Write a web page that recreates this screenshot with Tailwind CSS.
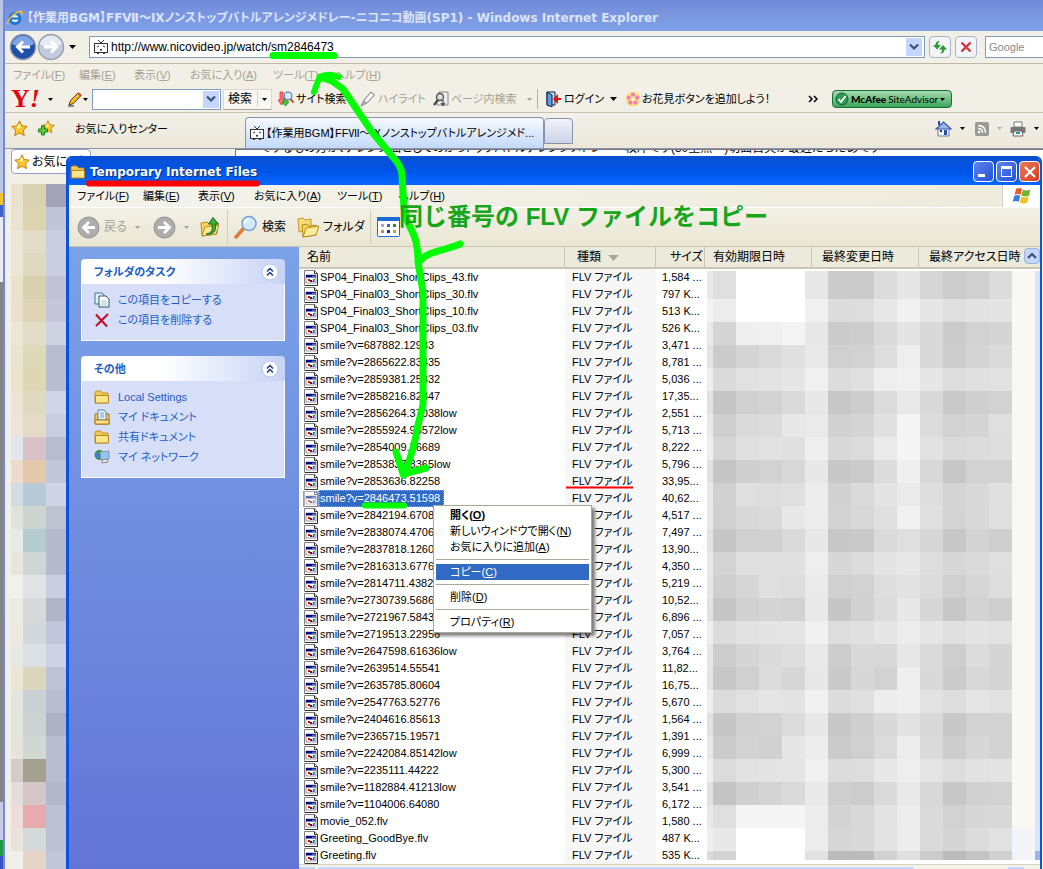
<!DOCTYPE html>
<html lang="ja">

<head>
    <meta charset="UTF-8" />
    <meta name="viewport" content="width=device-width, initial-scale=1.0" />
    <title>Temporary Internet Files</title>
    <script src="https://cdn.jsdelivr.net/npm/@tailwindcss/browser@4"></script>
</head>

<body class="bg-[#808080] text-black text-[11px] leading-4 font-['Liberation_Sans','Noto_Sans_CJK_JP',sans-serif] [font-feature-settings:'palt']">

    <!-- icon set -->
    <svg class="hidden">
        <symbol id="caret" viewBox="0 0 7 4"><path d="M0 0h7L3.5 4z" fill="currentColor" /></symbol>
        <symbol id="folder" viewBox="0 0 16 16">
            <path d="M1 3.5 2 2h5l1.500 2H14v10H1z" fill="#f3c94c" stroke="#b98412" stroke-width=".8" />
            <path d="M1.500 6.500H14.500V14H1.500z" fill="#fde68a" stroke="#a87512" stroke-width=".8" />
        </symbol>
        <symbol id="file" viewBox="0 0 16 16">
            <path d="M1.5.5h10l3 3v12h-13z" fill="#fff" stroke="#808080" />
            <path d="M11.5.5v3h3M14.5 4v11.5H2" fill="none" stroke="#333" />
            <path d="M3 5h10v8H3z" fill="#fff" stroke="#555" stroke-width=".6" />
            <path d="M3 5h10v2.5H3z" fill="#000a80" />
            <path d="M9.5 5.7h1v1h-1zM11.5 5.7h1v1h-1z" fill="#fff" />
            <path d="M5 9h2v2H5z" fill="#d00" /><path d="M7 10h2v2H7z" fill="#800" /><path d="M10 9h2v1.500h-2z" fill="#0a9a30" /><path d="M9.500 10.500h2V12h-2z" fill="#22f" />
        </symbol>
        <symbol id="tv" viewBox="0 0 14 14">
            <path d="M4 0l3 3 3-3" fill="none" stroke="#333" />
            <rect x=".5" y="3.500" width="13" height="9" fill="#fff" stroke="#333" />
            <path d="M3 7l2-1M11 7 9 6M6 10l1-.8 1 .8z" stroke="#333" fill="#333" />
            <path d="M3 13.500h2M9 13.500h2" stroke="#333" />
        </symbol>
        <symbol id="star" viewBox="0 0 16 16">
            <path d="M8 .8l2.200 4.700 5.100.6-3.800 3.500 1 5.100L8 12.200l-4.500 2.500 1-5.100L.7 6.100l5.100-.6z" fill="#fcc62c" stroke="#c07a08" stroke-width=".9" />
            <path d="M8 3l1.200 3.300L8 8 5 7z" fill="#fff3a8" />
        </symbol>
        <symbol id="chevrons" viewBox="0 0 18 18">
            <circle cx="9" cy="9" r="8" fill="#fff" stroke="#b6c4e8" />
            <path d="M6 8.500l3-3 3 3M6 12.500l3-3 3 3" fill="none" stroke="#15398c" stroke-width="1.500" />
        </symbol>
    </svg>

    <div class="relative h-screen min-h-[869px] w-full overflow-hidden">

        <!-- desktop edge -->
        <div class="absolute inset-y-0 left-0 w-[3px] flex flex-col">
            <div class="h-[193px] bg-[#b9c6e4]"></div>
            <div class="h-3 bg-[#f0c22c]"></div>
            <div class="h-3 bg-[#3f62c8]"></div>
            <div class="h-[65px] bg-[#e9eaf2]"></div>
            <div class="h-[520px] bg-[#858585]"></div>
            <div class="h-[38px] bg-[#c9cbe6]"></div>
            <div class="h-4 bg-[#1f9a3c]"></div>
            <div class="flex-1 bg-[#3b4fc4]"></div>
        </div>

        <!-- internet explorer window -->
        <section class="absolute inset-y-0 left-[3px] right-0 flex flex-col border-l-2 border-[#7488dc] bg-[#f1efe6]">
            <header class="h-[31px] shrink-0 flex items-center gap-1 pl-0.5 pt-1 whitespace-nowrap bg-linear-to-b from-[#6f88d8] via-[#7b97e0] to-[#7da0e8]">
                <svg class="w-4 h-4 shrink-0" viewBox="0 0 16 16">
                    <circle cx="8" cy="8.500" r="5" fill="#e8f3ff" stroke="#1d78d6" stroke-width="3" />
                    <path d="M4 8.500h8.500" stroke="#1d78d6" stroke-width="2.200" />
                    <path d="M1 14.500C-1 11 8 1 14.500 1.500c1 .2.8 2-.2 3.500" fill="none" stroke="#f6c21c" stroke-width="1.500" />
                </svg>
                <h1 class="text-[12px] font-bold text-[#dbe4fb] font-['DejaVu_Sans','Noto_Sans_CJK_JP',sans-serif]">【作業用BGM】FFⅦ～Ⅸノンストップバトルアレンジメドレー‐ニコニコ動画(SP1) - Windows Internet Explorer</h1>
            </header>

            <!-- address bar -->
            <div class="h-[33px] shrink-0 flex items-center pl-1 border-b border-[#bdb9a6] bg-[#f1efe6]">
                <button class="w-7 shrink-0" aria-label="戻る">
                    <svg class="w-7 h-7" viewBox="0 0 28 28">
                        <circle cx="14" cy="14" r="12.500" fill="#1c4fa8" stroke="#8c97ab" stroke-width="1.500" />
                        <path d="M3 11a11.500 11.500 0 0 1 22 0c-7 4-15 4-22 0z" fill="#7fa6e3" />
                        <path d="M21 14H9M14 8.500 8.500 14l5.500 5.500" fill="none" stroke="#fff" stroke-width="3" />
                    </svg>
                </button>
                <button class="w-7 shrink-0" aria-label="進む">
                    <svg class="w-7 h-7" viewBox="0 0 28 28">
                        <circle cx="14" cy="14" r="12.500" fill="#c3ccdc" stroke="#98a1b3" stroke-width="1.500" />
                        <path d="M3 11a11.500 11.500 0 0 1 22 0c-7 4-15 4-22 0z" fill="#e6ebf3" />
                        <path d="M7 14h12M14 8.500l5.500 5.500-5.500 5.500" fill="none" stroke="#fff" stroke-width="3" />
                    </svg>
                </button>
                <svg class="w-[7px] h-1 mx-1 shrink-0"><use href="#caret" /></svg>
                <div class="ml-[9px] h-[22px] flex-1 flex items-center pl-1 pr-0.5 bg-white border border-[#7f9db9]">
                    <svg class="w-3.5 h-3.5 shrink-0"><use href="#tv" /></svg>
                    <input type="text" aria-label="アドレス" value="http://www.nicovideo.jp/watch/sm2846473" class="flex-1 pl-[3px] text-[12px] leading-4 outline-none" />
                    <button class="w-4 h-[18px] flex items-center justify-center bg-[#c4d6fb]" aria-label="履歴">
                        <svg class="w-2.5 h-2" viewBox="0 0 10 8"><path d="M1 1.500l4 4 4-4" fill="none" stroke="#3d5076" stroke-width="2.200" /></svg>
                    </button>
                </div>
                <button class="ml-1 w-[22px] h-[22px] shrink-0 flex items-center justify-center rounded-sm bg-[#f3f5fa] border border-[#a9b4c8]" aria-label="更新">
                    <svg class="w-4 h-4" viewBox="0 0 16 16" fill="#2e9a32"><path d="M8 2C4.500 2 3.500 4 3.500 6H1l4 4.500L9 6H6C6 4 6.500 3 8 2z" /><path d="M8 14.500c3.500 0 4.500-2 4.500-4H15L11 6 7 10.500h3c0 2-.5 3-2 4z" /></svg>
                </button>
                <button class="ml-1 w-[22px] h-[22px] shrink-0 flex items-center justify-center rounded-sm bg-[#f3f5fa] border border-[#a9b4c8]" aria-label="中止">
                    <svg class="w-3 h-3" viewBox="0 0 12 12"><path d="M1.500 1.500l9 9M10.500 1.500l-9 9" stroke="#d2373c" stroke-width="2.400" /></svg>
                </button>
                <input type="text" aria-label="検索" placeholder="Google" class="ml-2 w-[58px] h-[22px] shrink-0 px-[3px] bg-white border border-r-0 border-[#7f9db9] text-[11px] placeholder:text-[#8a8a8a] outline-none" />
            </div>

            <!-- menu -->
            <nav class="h-[22px] shrink-0 flex items-center pl-2 text-[#a5a294] whitespace-nowrap">
                <button class="w-[66px] text-left">ファイル(<u>F</u>)</button>
                <button class="w-[55px] text-left">編集(<u>E</u>)</button>
                <button class="w-[56px] text-left">表示(<u>V</u>)</button>
                <button class="w-[83px] text-left">お気に入り(<u>A</u>)</button>
                <button class="w-[61px] text-left">ツール(<u>T</u>)</button>
                <button class="text-left">ヘルプ(<u>H</u>)</button>
            </nav>

            <!-- yahoo toolbar -->
            <div class="h-[27px] shrink-0 flex items-center pl-1.5 border-b border-[#c5c2b2] whitespace-nowrap">
                <span class="w-[35px] shrink-0 font-['Liberation_Serif',serif] font-bold text-[26px] leading-6 text-[#e60012]">Y<i>!</i></span>
                <svg class="w-[5px] h-[3px] mx-0.5 shrink-0"><use href="#caret" /></svg>
                <svg class="ml-3 w-4 h-4 shrink-0" viewBox="0 0 16 16">
                    <path d="M2 14l1.500-4.500L11 2l3 2.500-7.500 8z" fill="#f7b733" stroke="#5a3a08" /><path d="M11 2l3 2.500" stroke="#d43" stroke-width="2" /><path d="M1 15h6" stroke="#222" />
                </svg>
                <svg class="w-[5px] h-[3px] shrink-0"><use href="#caret" /></svg>
                <div class="ml-1 w-[129px] h-[21px] shrink-0 flex items-center p-px bg-white border border-[#7f9db9]">
                    <input type="text" aria-label="Yahoo!検索" class="w-0 flex-1 outline-none" />
                    <button class="w-4 h-[17px] flex items-center justify-center bg-[#c4d6fb]" aria-label="履歴">
                        <svg class="w-2.5 h-2" viewBox="0 0 10 8"><path d="M1 1.500l4 4 4-4" fill="none" stroke="#3d5076" stroke-width="2.200" /></svg>
                    </button>
                </div>
                <button class="ml-0.5 w-[49px] h-[21px] shrink-0 flex items-center bg-[#f8f7f2] border border-[#dcd9cc] border-b-[#a8a595]">
                    <span class="w-[34px] pl-1 border-r border-[#d5d2c4] text-[12px] text-left">検索</span>
                    <svg class="ml-1 w-[5px] h-[3px]"><use href="#caret" /></svg>
                </button>
                <button class="ml-1.5 w-[82px] shrink-0 flex items-center gap-0.5">
                    <svg class="w-4 h-4" viewBox="0 0 16 16">
                        <path d="M2 1h3v8h2l-3.500 5L0 9h2z" fill="#f77" stroke="#d22" stroke-width=".7" /><path d="M6 6h3v5h2l-3.500 4L4 11h2z" fill="#4c4" stroke="#171" stroke-width=".7" />
                        <circle cx="10" cy="5" r="3.800" fill="#d5ebff" stroke="#5b86c5" stroke-width="1.300" /><path d="M12.500 8l3 3.500" stroke="#c05a2a" stroke-width="2" />
                    </svg>サイト検索
                </button>
                <button class="w-[73px] shrink-0 flex items-center gap-0.5 text-[#a5a294]">
                    <svg class="w-4 h-4" viewBox="0 0 16 16"><path d="M1 15l3-6 7-8 3.500 3L7 12z" fill="#f5f5f5" stroke="#777" /><path d="M1 15l3-6 3 3z" fill="#aaa" /></svg>ハイライト
                </button>
                <button class="w-[104px] shrink-0 flex items-center gap-0.5 text-[#a5a294]">
                    <svg class="w-4 h-4" viewBox="0 0 16 16"><path d="M6 1h9v13H4V6z" fill="#eee" stroke="#888" /><circle cx="7" cy="6" r="3.500" fill="#ddd" stroke="#555" stroke-width="1.400" /><path d="M5 9l-4 5" stroke="#444" stroke-width="2.200" /><path d="M10 9v5M8 12l2 2.500 2-2.500" stroke="#555" fill="none" stroke-width="1.300" /></svg>ページ内検索
                    <svg class="ml-2 w-[5px] h-[3px]"><use href="#caret" /></svg>
                </button>
                <div class="w-px h-5 shrink-0 bg-[#b5b2a3]"></div>
                <button class="ml-2 w-[79px] shrink-0 flex items-center gap-0.5">
                    <svg class="w-4 h-4" viewBox="0 0 16 16"><path d="M1 1h8v13H1z" fill="#cde" stroke="#124" /><path d="M1 1l5 3v12l-5-2z" fill="#5b9be0" stroke="#124" /><path d="M15 8h-4M11 5.500 8.500 8l2.500 2.500z" stroke="#d11" fill="#d11" stroke-width="2" /></svg>ログイン
                    <svg class="ml-1 w-[7px] h-1"><use href="#caret" /></svg>
                </button>
                <button class="w-[183px] shrink-0 flex items-center gap-px">
                    <svg class="w-4 h-4" viewBox="0 0 16 16">
                        <circle cx="8" cy="8" r="7.500" fill="#fbe27a" />
                        <g fill="#f27cc0"><circle cx="8" cy="3.600" r="2.100" /><circle cx="12.200" cy="6.700" r="2.100" /><circle cx="10.600" cy="11.600" r="2.100" /><circle cx="5.400" cy="11.600" r="2.100" /><circle cx="3.800" cy="6.700" r="2.100" /></g>
                        <circle cx="8" cy="8" r="1.500" fill="#fff" />
                    </svg>お花見ボタンを追加しよう！
                </button>
                <svg class="w-2.5 h-2 shrink-0" viewBox="0 0 10 8"><path d="M1 1l3 3-3 3M6 1l3 3-3 3" fill="none" stroke="#000" stroke-width="1.500" /></svg>
                <button class="ml-3.5 w-[120px] h-[18px] shrink-0 flex items-center gap-0.5 pl-0.5 rounded-sm border border-[#14703a] bg-linear-to-b from-[#a5d9ae] to-[#35a85c] font-['Lato',sans-serif] text-[10px]">
                    <svg class="w-3.5 h-3.5 shrink-0" viewBox="0 0 14 14"><circle cx="7" cy="7" r="6" fill="#2f9a55" stroke="#175c33" /><path d="M3.500 7l2.500 3 4.500-6" fill="none" stroke="#fff" stroke-width="1.800" /></svg>
                    <b class="font-black">McAfee</b> SiteAdvisor
                    <svg class="w-[5px] h-[3px]"><use href="#caret" /></svg>
                </button>
            </div>

            <!-- favorites and tabs -->
            <div class="h-9 shrink-0 flex items-end border-b border-[#8b94b5] bg-linear-to-b from-[#f3f1e9] to-[#ebe8da] whitespace-nowrap">
                <div class="w-[240px] h-full shrink-0 flex items-center pl-1.5 pb-1">
                    <svg class="w-[17px] h-[17px]"><use href="#star" /></svg>
                    <svg class="ml-2.5 w-[17px] h-[17px]" viewBox="0 0 17 17"><use href="#star" x="3" width="14" height="14" /><path d="M3.500 6h3v3h3v3h-3v3h-3v-3h-3V9h3z" fill="#5ccb3c" stroke="#1e7d18" /></svg>
                    <span class="ml-5">お気に入りセンター</span>
                </div>
                <button class="w-[299px] h-[31px] shrink-0 flex items-center gap-0.5 pl-1 rounded-t border border-b-0 border-[#8a93ae] bg-linear-to-b from-[#f6f9ff] to-[#c3d9fb] text-[11px]">
                    <svg class="w-3.5 h-3.5"><use href="#tv" /></svg>【作業用BGM】FFⅦ～Ⅸノンストップバトルアレンジメド...
                </button>
                <button class="w-[29px] h-[26px] mb-1 shrink-0 rounded-t border border-[#8a93ae] bg-linear-to-b from-[#f2f3fa] to-[#cdd2e8]" aria-label="新しいタブ"></button>
                <div class="flex-1 h-full flex items-center justify-end gap-2 pr-1 pb-1">
                    <svg class="w-[17px] h-[17px]" viewBox="0 0 17 17"><path d="M3 8v8h11V8" fill="#f0f3fa" stroke="#6a7ba0" /><path d="M1 9l7.500-7L16 9z" fill="#9db6e6" stroke="#3a59a8" stroke-width="1.200" /><path d="M3 1h2v4H3z" fill="#2440c0" /><path d="M9 10h3v5H9z" fill="#264f9c" /><path d="M5 10h2v2H5z" fill="#333" /></svg>
                    <svg class="w-[5px] h-[3px]"><use href="#caret" /></svg>
                    <svg class="ml-0.5 w-3.5 h-3.5" viewBox="0 0 14 14"><rect width="14" height="14" rx="2" fill="#9a9a94" /><circle cx="4" cy="10" r="1.300" fill="#fff" /><path d="M3 6.500c3 0 4.500 2 4.500 4.500M3 3.500c5 0 7.500 3 7.500 7.500" fill="none" stroke="#fff" stroke-width="1.300" /></svg>
                    <svg class="w-[5px] h-[3px] text-[#b5b2a3]"><use href="#caret" /></svg>
                    <svg class="w-4 h-4" viewBox="0 0 16 16"><path d="M4 1h8v5H4z" fill="#fff" stroke="#777" /><rect x=".5" y="6" width="15" height="6" rx="1" fill="#777" /><path d="M4 10h8l1 5H3z" fill="#fff" stroke="#666" /><path d="M6 12h4" stroke="#1a9bb0" stroke-width="2" /></svg>
                    <svg class="w-[5px] h-[3px]"><use href="#caret" /></svg>
                </div>
            </div>

            <!-- page area -->
            <div class="flex-1 min-h-0 flex overflow-hidden">
                <aside class="w-[230px] shrink-0">
                    <button class="ml-1.5 w-20 h-[25px] flex items-center gap-0.5 pl-0.5 bg-white border border-[#8fa3c4] rounded-sm text-[12px] whitespace-nowrap">
                        <svg class="w-4 h-4 shrink-0"><use href="#star" /></svg>お気に入り
                    </button>
                    <div id="favMosaic" class="ml-1.5 mt-2.5 w-[55px]"></div>
                </aside>
                <div class="flex-1 bg-white border-l border-t border-[#777] pl-6 overflow-hidden">
                    <p class="-mt-2.5 whitespace-nowrap text-[12px]">でするもの方が、アレンジ曲としてのかっトックバトルアレンジメドレー一枚岸です(30堂無一)切面首矢が最近だらだめです</p>
                </div>
            </div>
        </section>

        <!-- explorer window -->
        <section class="absolute top-[156px] bottom-0 left-[66px] right-px flex flex-col border-l-3 border-r-2 border-[#0a52e0] rounded-t-md overflow-hidden bg-[#ece9d8]">
            <header class="h-[29px] shrink-0 flex items-center pt-0.5 bg-linear-to-b from-[#0a4fd0] via-[#0054e8] to-[#0667ff]">
                <svg class="ml-px w-4 h-4"><use href="#folder" /></svg>
                <h2 class="ml-1 flex-1 text-[12px] font-bold text-white font-['DejaVu_Sans',sans-serif] [text-shadow:1px_1px_#0a2d80]">Temporary Internet Files</h2>
                <button class="w-[21px] h-[21px] mr-0.5 flex items-end rounded-sm border border-white bg-linear-to-br from-[#5f84ee] to-[#2450d8] pl-1 pb-1" aria-label="最小化"><span class="w-[7px] h-[3px] bg-white"></span></button>
                <button class="w-[21px] h-[21px] mr-0.5 flex items-center justify-center rounded-sm border border-white bg-linear-to-br from-[#5f84ee] to-[#2450d8]" aria-label="最大化"><span class="w-[11px] h-[11px] border border-t-3 border-white"></span></button>
                <button class="w-[21px] h-[21px] flex items-center justify-center rounded-sm border border-white bg-linear-to-br from-[#ea7a5c] to-[#d63a14]" aria-label="閉じる"><svg class="w-3 h-3" viewBox="0 0 12 12"><path d="M1 1l10 10M11 1 1 11" stroke="#fff" stroke-width="2.200" /></svg></button>
            </header>

            <!-- menu -->
            <nav class="h-[23px] shrink-0 flex items-center pl-2 border-b border-white whitespace-nowrap bg-linear-to-r from-[#f4f3ec] to-[#eeebdc]">
                <button class="w-[66px] text-left">ファイル(<u>F</u>)</button>
                <button class="w-[55px] text-left">編集(<u>E</u>)</button>
                <button class="w-[56px] text-left">表示(<u>V</u>)</button>
                <button class="w-[83px] text-left">お気に入り(<u>A</u>)</button>
                <button class="w-[61px] text-left">ツール(<u>T</u>)</button>
                <button class="text-left">ヘルプ(<u>H</u>)</button>
                <div class="ml-auto w-[38px] h-full flex items-center justify-center bg-white border-l border-[#d5d2c4]">
                    <svg class="w-5 h-[18px]" viewBox="0 0 20 18"><path d="M4 2c2-1.500 4-1.500 6 0L8.500 8c-2-1.300-4-1.300-6 0z" fill="#ee5a28" /><path d="M11 2.500c2 1.300 5 1.300 7.500 0L17 8.500c-2.500 1.300-5 1.300-7.500 0z" fill="#6db52c" /><path d="M2.200 9c2-1.300 4-1.300 6 0L6.700 15c-2-1.300-4-1.300-6 0z" fill="#3b7fd8" /><path d="M9.200 9.500c2 1.300 5 1.300 7.500 0l-1.500 6c-2.500 1.300-5 1.300-7.500 0z" fill="#f7c01e" /></svg>
                </div>
            </nav>

            <!-- toolbar -->
            <div class="h-[39px] shrink-0 flex items-center pl-2 border-b border-[#c9c6b4] whitespace-nowrap bg-linear-to-b from-[#f3f1e7] to-[#e9e6d3]">
                <button class="w-[76px] flex items-center gap-1 text-[12px] text-[#a5a294]">
                    <svg class="w-[23px] h-[23px]" viewBox="0 0 23 23"><circle cx="11.500" cy="11.500" r="10.500" fill="#adadad" stroke="#8f8f8f" /><path d="M18 11.500H7M12 6l-5.500 5.500L12 17" fill="none" stroke="#fff" stroke-width="2.800" /></svg>戻る
                    <svg class="ml-1 w-[5px] h-[3px]"><use href="#caret" /></svg>
                </button>
                <button class="w-[46px] flex items-center gap-2 text-[#a5a294]" aria-label="進む">
                    <svg class="w-[23px] h-[23px]" viewBox="0 0 23 23"><circle cx="11.500" cy="11.500" r="10.500" fill="#adadad" stroke="#8f8f8f" /><path d="M5 11.500h11M11 6l5.500 5.500L11 17" fill="none" stroke="#fff" stroke-width="2.800" /></svg>
                    <svg class="w-[5px] h-[3px]"><use href="#caret" /></svg>
                </button>
                <button class="w-[28px]" aria-label="上へ">
                    <svg class="w-[22px] h-[22px]" viewBox="0 0 22 22"><path d="M2 7l6-1 2 2 8-1v11L3 20z" fill="#f5d35e" stroke="#b58a1a" /><path d="M3 20 6 11l14-2-3 9z" fill="#fde995" stroke="#b58a1a" /><path d="M7 18c6-1 7-4 6-10H9.500L14 1.500 19.500 8h-3c1 7-2 11-9.500 10z" fill="#3fae3a" stroke="#176b1a" /></svg>
                </button>
                <div class="w-px h-[34px] bg-[#cfccba]"></div>
                <button class="ml-1.5 w-[63px] flex items-center gap-1 text-[12px]">
                    <svg class="w-6 h-6" viewBox="0 0 24 24"><path d="M10 13 2 22" stroke="#e0793c" stroke-width="3.500" stroke-linecap="round" /><circle cx="15" cy="8.500" r="7" fill="#cfeafd" stroke="#7c9fd6" stroke-width="1.500" /><path d="M11 8c0-2 2-4 4-4" stroke="#fff" stroke-width="2" fill="none" /></svg>検索
                </button>
                <button class="w-[73px] flex items-center gap-1 text-[12px]">
                    <svg class="w-[22px] h-[22px]" viewBox="0 0 22 22"><path d="M1 3l5-1 2 2 6-1v10l-12 3z" fill="#f8dc78" stroke="#c1962a" /><path d="M5 9l5-1 2 2 7-1v10L6 21z" fill="#f5d35e" stroke="#b58a1a" /><path d="M6 21l3-9 13-2-3 9z" fill="#fdeb9c" stroke="#b58a1a" /></svg>フォルダ
                </button>
                <div class="w-px h-[34px] bg-[#cfccba]"></div>
                <button class="ml-1.5" aria-label="表示">
                    <svg class="w-[23px] h-5" viewBox="0 0 23 20"><rect x=".5" y=".5" width="22" height="19" rx="1" fill="#fff" stroke="#1c6ad4" /><path d="M0 0h23v4H0z" fill="#1c6ad4" /><path d="M4 7h3v3H4z" fill="#aab" /><path d="M10 7h3v3h-3z" fill="#36c" /><path d="M16 7h3v3h-3z" fill="#292" /><path d="M4 13h3v3H4z" fill="#e75" /><path d="M10 13h3v3h-3z" fill="#139" /><path d="M16 13h3v3h-3z" fill="#d9a010" /></svg>
                </button>
            </div>

            <div class="flex-1 min-h-0 flex overflow-hidden">
                <!-- task pane -->
                <aside class="w-[230px] shrink-0 flex flex-col gap-[15px] pl-3 pr-3.5 pt-3 bg-linear-to-b from-[#7ba2e7] to-[#6375d6] text-[#215dc6]">
                    <section>
                        <h3 class="h-[25px] flex items-center justify-between pl-[13px] pr-1.5 rounded-t bg-linear-to-r from-white from-40% to-[#c6d3f7] font-bold text-[11px]">フォルダのタスク<svg class="w-[18px] h-[18px]"><use href="#chevrons" /></svg></h3>
                        <ul class="pt-1.5 pb-2.5 pl-3 border border-t-0 border-white bg-[#d6dff7]">
                            <li><a href="#" class="h-5 flex items-center gap-2">
                                <svg class="w-4 h-4" viewBox="0 0 16 16"><path d="M1 1h7l2 2v9H1z" fill="#dff0ff" stroke="#3c6ea8" /><path d="M5 4h7l3 3v8H5z" fill="#fff" stroke="#33506e" /><path d="M7 9h6M7 11h6M7 13h6" stroke="#9cc" /></svg>この項目をコピーする</a></li>
                            <li><a href="#" class="h-5 flex items-center gap-2">
                                <svg class="w-4 h-4" viewBox="0 0 16 16"><path d="M2 2.500l11 12M14 2 2 14" stroke="#c41230" stroke-width="2.200" /></svg>この項目を削除する</a></li>
                        </ul>
                    </section>
                    <section>
                        <h3 class="h-[25px] flex items-center justify-between pl-[13px] pr-1.5 rounded-t bg-linear-to-r from-white from-40% to-[#c6d3f7] font-bold text-[11px]">その他<svg class="w-[18px] h-[18px]"><use href="#chevrons" /></svg></h3>
                        <ul class="pt-1.5 pb-2.5 pl-3 border border-t-0 border-white bg-[#d6dff7]">
                            <li><a href="#" class="h-5 flex items-center gap-2"><svg class="w-4 h-4"><use href="#folder" /></svg>Local Settings</a></li>
                            <li><a href="#" class="h-5 flex items-center gap-2">
                                <svg class="w-4 h-4" viewBox="0 0 16 16"><path d="M1 5h14v10H1z" fill="#f3c94c" stroke="#a87512" /><path d="M4 1h6l2 2v8H4z" fill="#eaf6ff" stroke="#4d83b8" /><path d="M6 4h4M6 6h4M6 8h4" stroke="#79b" /><path d="M1 11h14v4H1z" fill="#fde68a" stroke="#a87512" /></svg>マイ ドキュメント</a></li>
                            <li><a href="#" class="h-5 flex items-center gap-2"><svg class="w-4 h-4"><use href="#folder" /></svg>共有ドキュメント</a></li>
                            <li><a href="#" class="h-5 flex items-center gap-2">
                                <svg class="w-4 h-4" viewBox="0 0 16 16"><circle cx="5.500" cy="6" r="5" fill="#2f9a3a" /><path d="M1 5c3-3 5 0 4 3s-3 1-4-3z" fill="#3b7fe0" /><path d="M6 3l9-1v8l-8 1z" fill="#8fc8f5" stroke="#8a93ae" /><path d="M8 14l6-1-1-3-5 1z" fill="#e8e8e8" stroke="#888" /></svg>マイ ネットワーク</a></li>
                        </ul>
                    </section>
                </aside>

                <!-- file list -->
                <main class="relative flex-1 min-w-0 flex flex-col bg-white">
                    <table class="w-full table-fixed border-separate border-spacing-0 whitespace-nowrap">
                        <colgroup>
                            <col class="w-[266px]" />
                            <col class="w-[91px]" />
                            <col class="w-[49px]" />
                            <col class="w-[107px]" />
                            <col class="w-[107px]" />
                            <col />
                        </colgroup>
                        <thead class="text-[12px] text-left bg-[#ebeadb]">
                            <tr class="h-[22px]">
                                <th class="font-normal p-0 pl-2 border-b-2 border-r border-[#c9c6b4]">名前</th>
                                <th class="font-normal p-0 pl-3 border-b-2 border-r border-[#c9c6b4]">種類 <svg class="inline ml-1 w-[11px] h-1.5 text-[#aca899]"><use href="#caret" /></svg></th>
                                <th class="font-normal p-0 pl-3.5 border-b-2 border-r border-[#c9c6b4]">サイズ</th>
                                <th class="font-normal p-0 pl-2 border-b-2 border-r border-[#c9c6b4]">有効期限日時</th>
                                <th class="font-normal p-0 pl-2.5 border-b-2 border-r border-[#c9c6b4]">最終変更日時</th>
                                <th class="font-normal p-0 pl-2.5 border-b-2 border-[#c9c6b4]">最終アクセス日時</th>
                            </tr>
                        </thead>
                        <tbody id="files"></tbody>
                    </table>

                    <!-- horizontal scrollbar -->
                    <div class="h-[17px] shrink-0 flex pt-0.5 border-t border-[#d5d2c4] bg-[#f3f2ea]">
                        <div class="w-4 bg-[#c4d6fb]"></div>
                        <div class="ml-0.5 w-[598px] rounded-sm bg-[#c4d6fb]"></div>
                        <div class="ml-auto mr-4 w-4 bg-[#c4d6fb]"></div>
                    </div>

                    <!-- hidden date columns -->
                    <div id="dateMosaic" class="absolute top-6 -right-[3px] w-[336px]"></div>

                    <!-- vertical scroll button -->
                    <button class="absolute top-px right-0 w-4 h-4 flex items-center justify-center rounded-sm bg-[#c4d6fb] border border-[#9db6e6]" aria-label="上へスクロール">
                        <svg class="w-2.5 h-2" viewBox="0 0 10 8"><path d="M1 6l4-4 4 4" fill="none" stroke="#3d5076" stroke-width="2.200" /></svg>
                    </button>
                </main>
            </div>
        </section>

        <!-- context menu -->
        <div class="absolute left-[433px] top-[505px] w-[159px] flex flex-col pt-px pb-0.5 px-0.5 bg-white border border-[#aca899] shadow-[3px_3px_3px_rgba(0,0,0,0.5)]">
            <button class="h-4 pl-3.5 text-left font-bold">開く(<u>O</u>)</button>
            <button class="h-4 pl-3.5 text-left">新しいウィンドウで開く(<u>N</u>)</button>
            <button class="h-4 pl-3.5 text-left">お気に入りに追加(<u>A</u>)</button>
            <hr class="my-1 border-[#aca899]" />
            <button class="h-4 pl-3.5 text-left bg-[#316ac5] text-white">コピー(<u>C</u>)</button>
            <hr class="my-1 border-[#aca899]" />
            <button class="h-4 pl-3.5 text-left">削除(<u>D</u>)</button>
            <hr class="my-1 border-[#aca899]" />
            <button class="h-4 pl-3.5 text-left">プロパティ(<u>R</u>)</button>
        </div>

        <!-- hand drawn marks -->
        <svg class="absolute left-0 top-0 w-[1043px] h-[869px] pointer-events-none" viewBox="0 0 1043 869" fill="none" stroke-linecap="round" stroke-linejoin="round">
            <g stroke="#00ff00" stroke-width="7">
                <path d="M273 55.500h61" />
                <path d="M320 77L332 81 343 89 372 132 397 162Q402 169 402 176L404 208Q406 220 412 231 418 242 418 262L423 292V405L418 425Q414 450 404 475" />
                <path d="M339 77c-8-3-14-3-19 0-3 5-4 10-6 15" stroke-width="6" />
                <path d="M396 452l7 22 23-6" />
                <path d="M419 262c8-11 22-10 41-18" />
                <path d="M365 505.500h39" stroke-width="6" />
            </g>
            <path d="M89 183.500h168" stroke="#ff0000" stroke-width="6" />
            <path d="M566 487.500h67" stroke="#ff0000" stroke-width="2" stroke-linecap="butt" />
        </svg>
        <p class="absolute left-[399px] top-[203px] whitespace-nowrap text-[24px] leading-7 font-bold text-[#19a519] font-['Liberation_Sans','Noto_Sans_CJK_JP',sans-serif] [font-feature-settings:normal]">同じ番号の FLV ファイルをコピー</p>
    </div>

    <script>
        // name, size
        const files = [
            ['SP04_Final03_ShortClips_43.flv', '1,584 ...'],
            ['SP04_Final03_ShortClips_30.flv', '797 K...'],
            ['SP04_Final03_ShortClips_10.flv', '513 K...'],
            ['SP04_Final03_ShortClips_03.flv', '526 K...'],
            ['smile?v=687882.12983', '3,471 ...'],
            ['smile?v=2865622.83435', '8,781 ...'],
            ['smile?v=2859381.25332', '5,036 ...'],
            ['smile?v=2858216.82347', '17,35...'],
            ['smile?v=2856264.37038low', '2,551 ...'],
            ['smile?v=2855924.93572low', '5,713 ...'],
            ['smile?v=2854009.76689', '8,222 ...'],
            ['smile?v=2853837.8365low', '5,796 ...'],
            ['smile?v=2853636.82258', '33,95...'],
            ['smile?v=2846473.51598', '40,62...'],
            ['smile?v=2842194.67080', '4,517 ...'],
            ['smile?v=2838074.47065', '7,497 ...'],
            ['smile?v=2837818.12603', '13,90...'],
            ['smile?v=2816313.67761', '4,350 ...'],
            ['smile?v=2814711.43820', '5,219 ...'],
            ['smile?v=2730739.56861', '10,52...'],
            ['smile?v=2721967.58430', '6,896 ...'],
            ['smile?v=2719513.22956', '7,057 ...'],
            ['smile?v=2647598.61636low', '3,764 ...'],
            ['smile?v=2639514.55541', '11,82...'],
            ['smile?v=2635785.80604', '16,75...'],
            ['smile?v=2547763.52776', '5,670 ...'],
            ['smile?v=2404616.85613', '1,564 ...'],
            ['smile?v=2365715.19571', '1,391 ...'],
            ['smile?v=2242084.85142low', '6,999 ...'],
            ['smile?v=2235111.44222', '5,300 ...'],
            ['smile?v=1182884.41213low', '3,541 ...'],
            ['smile?v=1104006.64080', '6,172 ...'],
            ['movie_052.flv', '1,580 ...'],
            ['Greeting_GoodBye.flv', '487 K...'],
            ['Greeting.flv', '535 K...']
        ];
        const selected = 13;

        document.getElementById('files').innerHTML = files.map(([name, size], i) => `
            <tr class="h-[17px]">
                <td class="p-0 pl-1"><div class="h-[17px] flex items-center">
                    <svg class="w-4 h-4 ${i === selected ? 'opacity-60 bg-[#316ac5]' : ''}"><use href="#file" /></svg>
                    <span class="h-[17px] px-px ${i === selected ? 'w-[125px] bg-[#316ac5] text-white outline-1 -outline-offset-1 outline-dotted outline-[#e0a040]' : ''}">${name}</span>
                </div></td>
                <td class="p-0 pl-[7px] align-top bg-[#f7f7f7]">FLV ファイル</td>
                <td class="p-0 pl-1.5 align-top">${size}</td>
                <td class="p-0"></td><td class="p-0"></td><td class="p-0"></td>
            </tr>`).join('');

        // gray blocks over the date columns, one hex pair per cell
        const dates = [
            'e9 df ff ff ff e7 cb cb dc e6 d6 cc d0 dc',
            'f3 ec ff ff ff f0 dc dd e7 f1 e6 df e2 e4',
            'ea d5 ef f0 f4 e8 cb cd da e4 d9 cb d2 d5',
            'e4 cb d4 da e0 e9 d0 d2 dd ee d9 cc d4 da',
            'ee da e1 e3 e6 f0 dc e0 ee f0 e6 dd e0 e2',
            'e2 c5 d0 d2 da e8 c7 cd db e9 d8 c9 cf d2',
            'e9 cf da dc e8 ea d1 d5 e0 f4 dc d2 d5 df',
            'ee d6 e0 e2 e0 ef d9 dc ea f5 e2 da dc de',
            'e2 c6 cf d2 d8 e8 c8 cb dc ef d8 c7 d2 d2',
            'e8 d1 df dd df ed d1 da e4 eb de d5 d9 e0',
            'e9 d0 d8 da e8 ec d3 d8 e0 f1 e0 d4 d9 df',
            'e3 c6 d0 d1 da e8 c7 c9 da df d7 c7 d3 cf',
            'e9 d4 e0 df e0 ee d7 db e4 e8 de d7 da df',
            'e6 cf d6 df dd ea d0 d2 de e2 db d0 d6 dd',
            'e2 c5 d1 d5 d2 e9 c6 d1 dc e8 d7 c7 d3 cf',
            'ee dc e2 e4 e5 f1 dd e0 e6 ec e6 e0 e4 e3',
            'e7 cc d5 da de e9 cd d9 d8 e7 da ce dc d5',
            'e4 c8 d0 dc d6 e8 ca d7 d2 ef d9 cb d8 d5',
            'ee db e1 e5 e3 f1 dc df ed ef e3 dd e5 e2',
            'e2 c6 d1 d3 db e8 c8 cf d9 e2 d9 c8 d2 d2',
            'e8 cb d3 d1 e6 ec cb d0 db ed da cd d7 d3',
            'ee db e2 e4 e5 f1 dc dd e8 ee e5 dd e2 e4',
            'e2 c4 cf d4 da e9 cf cc da e9 d8 c7 d1 d3',
            'e9 df f5 f5 f5 ec d3 d8 e3 ec da d2 d7 d8',
            'ef e8 ff ff ff ec d6 d8 e3 ed da d5 dc e2',
            'dc d3 ff ff ff e2 bb bc d2 df cc bb c4 d0'
        ];
        document.getElementById('dateMosaic').innerHTML = dates.map((row, r) => {
            const h = r === 0 ? 28 : r === 25 ? 9 : 23;
            const cells = row.split(' ').map((c, i) =>
                `<div style="width:${i === 0 ? 6 : 23}px;background:#${c}${c}${c}"></div>`).join('');
            return `<div class="flex" style="height:${h}px">${cells}<div class="w-[23px] ${r > 23 ? 'bg-[#f3f5fb]' : 'bg-[#f8f8f5]'}"></div><div class="flex-1 ${r === 25 ? 'bg-[#9db4ea]' : 'bg-[#dbe4f8]'}"></div></div>`;
        }).join('');

        // blocks over the favorites list
        const favs = [
            'e8e2cf d8d2b0 a2a3b9', 'ebe3cf ddd3ad c1c5d8', 'ece6d6 e3ddc8 cacee1', 'ece6d6 dfd9bf cacee1',
            'eae2ca d8d0ae bfc3d5', 'ebe0cc dfd5b6 c3c7d9', 'ede5d6 e3ddc8 ced3e4', 'ebe5cd dfd9ba b8bdd0',
            'ebe4cb ded7b3 b8bdd0', 'ede4d7 dfd9bf d0d5e9', 'eee4d8 e3dbc5 c8cde0', 'e2e6ef d9c2c7 b7bcd1',
            'eddccb e5c7ab c2c7dc', 'd3dce3 b6cad8 ced3e5', 'e1e2da cdd3ce bfc2d0', 'e6ebe9 b5ccd0 b5bacd',
            'e7e6dd d0d5d7 b5bacd', 'f2f0eb e2e3e4 c9cee2', 'ecebe3 d7dad8 b0b5c9', 'edebe0 d3d8db c1c6da',
            'e6e8e3 dae0e3 cdd2e5', 'ede6d6 dcd6be bdc2d4', 'e5e5df c9d0d6 b8bdd0', 'e6e5dc ced1d1 adb2c5',
            'e6e5dc d1d7d3 b8bdd0', 'd4ccc5 a5a190 b8bdd0', 'e3dede d7c6c8 b2b7cb', 'f0dcdd e8aaac bbc0d4',
            'e9e3db d5d9d7 bbc0d4', 'f0efeb e6d4c6 c1c6d9'
        ];
        document.getElementById('favMosaic').innerHTML = favs.map(row => {
            const [a, b, c] = row.split(' ');
            return `<div class="flex h-[23px]"><div class="w-3" style="background:#${a}"></div><div class="w-[23px]" style="background:#${b}"></div><div class="w-5" style="background:#${c}"></div></div>`;
        }).join('');
    </script>

</body>

</html>
